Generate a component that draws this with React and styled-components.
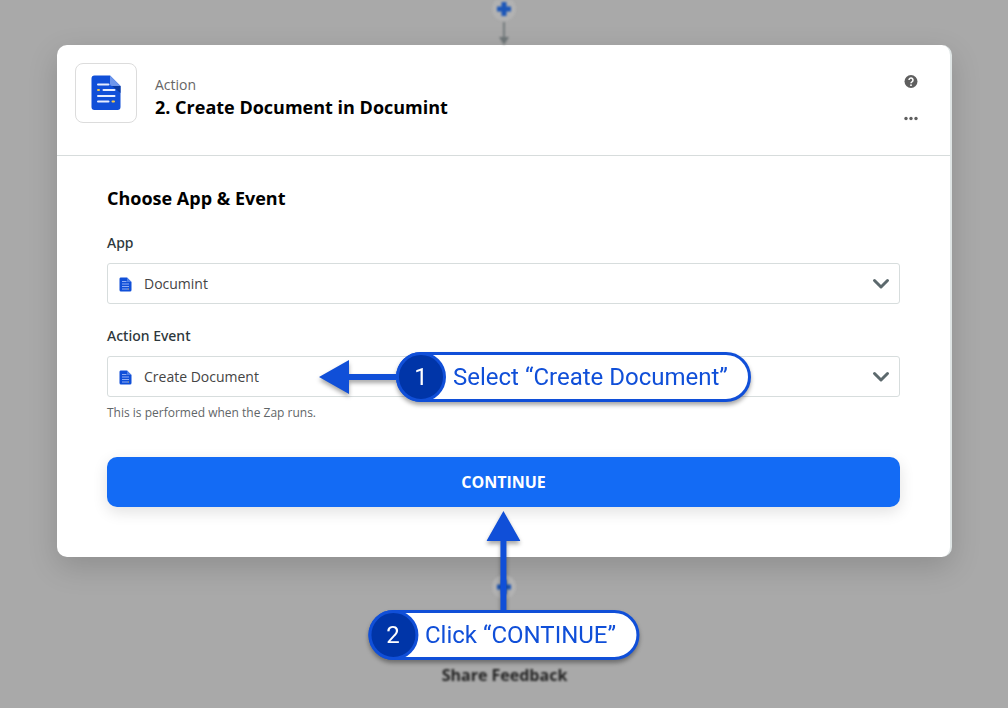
import styled, { createGlobalStyle } from 'styled-components'

const GlobalStyle = createGlobalStyle`
  * {
    box-sizing: border-box;
  }

  body {
    margin: 0;
    background-color: #a9a9a9;
    font-family: 'Open Sans', 'Noto Sans', sans-serif;
    color: #000;
  }

  h1, h2, p {
    margin: 0;
  }
`

const Page = styled.main`
  display: flex;
  flex-direction: column;
  align-items: center;
  min-height: 100vh;
  padding: 0 56px 0 57px;
  overflow: hidden;
`

const TopConnector = styled.svg`
  display: block;
  flex: none;
  filter: blur(1px);
`

const BottomConnector = styled.svg`
  display: block;
  flex: none;
  margin-top: 17px;
  filter: blur(1px);
`

const Card = styled.section`
  width: 100%;
  border-right: 2px solid #dfe5e5;
  border-radius: 10px;
  background-color: #fff;
  box-shadow: 0 10px 30px rgba(0, 0, 0, .16);
`

const CardHeader = styled.header`
  display: flex;
  align-items: flex-start;
  gap: 18px;
  padding: 18px 32px 28px 18px;
  border-bottom: 1px solid #d7dcdc;
`

const AppIcon = styled.div`
  display: flex;
  align-items: center;
  justify-content: center;
  width: 62px;
  height: 60px;
  border: 1px solid #dcdcdc;
  border-radius: 8px;
`

const Heading = styled.div`
  flex: 1;
  padding-top: 12px;
`

const StepKind = styled.p`
  font-size: 14px;
  line-height: 20px;
  color: #666;
`

const StepTitle = styled.h1`
  font-size: 18px;
  font-weight: 700;
  line-height: 24px;
`

const HeaderActions = styled.div`
  display: flex;
  flex-direction: column;
  gap: 20px;
  padding-top: 10px;
`

const IconButton = styled.button`
  display: flex;
  padding: 0;
  border: 0;
  background: none;
  color: #5f5f5f;
  cursor: pointer;
`

const CardBody = styled.div`
  padding: 29px 50px 50px;
`

const SectionTitle = styled.h2`
  margin-bottom: 22px;
  font-size: 18px;
  font-weight: 700;
  line-height: 26px;
`

const Field = styled.div`
  margin-bottom: 22px;
`

const FieldLabel = styled.label`
  display: block;
  margin-bottom: 10px;
  font-family: 'Noto Sans', sans-serif;
  font-size: 14px;
  font-weight: 500;
  line-height: 20px;
  color: #2d373b;
`

const SelectBox = styled.div`
  position: relative;
  display: grid;
  align-items: center;

  > * {
    grid-area: 1 / 1;
  }
`

const Select = styled.select`
  width: 100%;
  height: 41px;
  padding: 0 36px;
  border: 1px solid #d7dddd;
  border-radius: 3px;
  background-color: #fff;
  font-family: inherit;
  font-size: 14px;
  color: #444;
  appearance: none;
  cursor: pointer;
`

const LeadingIcon = styled.span`
  display: flex;
  justify-self: start;
  padding: 2px 0 0 12px;
  pointer-events: none;
`

const Chevron = styled.svg`
  justify-self: end;
  margin-right: 10px;
  pointer-events: none;
`

const Hint = styled.p`
  margin-top: 6px;
  font-size: 12px;
  line-height: 20px;
  color: #5f6668;
`

const ContinueArea = styled.div`
  position: relative;
  margin-top: 34px;
`

const ContinueButton = styled.button`
  display: block;
  width: 100%;
  height: 50px;
  border: 0;
  border-radius: 10px;
  background-color: #136bf5;
  box-shadow: 0 5px 15px rgba(0, 0, 0, .12);
  font-family: inherit;
  font-size: 16px;
  font-weight: 700;
  color: #fff;
  cursor: pointer;
`

const CalloutGroup = styled.div`
  position: absolute;
  z-index: 1;
  display: flex;
  align-items: center;
  filter: drop-shadow(0 3px 2px rgba(0, 0, 0, .35));
  pointer-events: none;
`

const SideCallout = styled(CalloutGroup)`
  top: -4px;
  left: 212px;
`

const BelowCallout = styled(CalloutGroup)`
  top: 54px;
  left: 50%;
  flex-direction: column;
  transform: translateX(-50%);
`

const Pill = styled.div`
  display: flex;
  align-items: center;
  height: 50px;
  padding-right: 20px;
  border: 3px solid #104fd8;
  border-radius: 25px;
  background-color: #fff;
  font-family: Roboto, sans-serif;
  font-size: 24px;
  color: #104fd8;
  white-space: nowrap;
`

const Badge = styled.span`
  display: flex;
  flex: none;
  align-items: center;
  justify-content: center;
  width: 50px;
  height: 50px;
  margin: 0 7px 0 -3px;
  border: 3px solid #104fd8;
  border-radius: 50%;
  background-color: #0035a8;
  color: #fff;
`

const Feedback = styled.a`
  margin-top: 63px;
  font-size: 16px;
  font-weight: 700;
  line-height: 24px;
  color: #222;
  text-decoration: none;
  filter: blur(1px);
`

const DocumintLogo = () => (
  <svg width="30" height="36" viewBox="0 0 30 36" aria-hidden="true">
    <path d="M3.500 .5H19L29.500 11V32a3 3 0 0 1-3 3H3.500a3 3 0 0 1-3-3V3.500a3 3 0 0 1 3-3z" fill="#104fd8" />
    <path d="M21 11H29.500V18z" fill="#0a3aa0" />
    <path d="M19 .5L29.500 11H21a2 2 0 0 1-2-2z" fill="#6d96ec" />
    <g stroke="#e6edff" strokeWidth="2" strokeLinecap="round">
      <path d="M7 9.500H17.500M12.500 15H23.500M7 21H23.500M7 26.500H17.500" />
      <path d="M7 15H8M21.500 26.500H23" stroke="#f4c94d" />
    </g>
  </svg>
)

const SmallLogo = () => (
  <svg width="13" height="15" viewBox="0 0 13 15" aria-hidden="true">
    <path d="M1.500 0.500H8L12.500 5V13a1.500 1.500 0 0 1-1.500 1.500H2A1.500 1.500 0 0 1 .5 13V2a1.500 1.500 0 0 1 1-1.500z" fill="#104fd8" />
    <path d="M8 .5L12.500 5H8z" fill="#4f7fe6" />
    <path d="M3 4.500H7.500M3 7H10M3 9.500H10M3 12H9" stroke="#8fadf5" />
    <path d="M9 12H10" stroke="#d9bd69" />
  </svg>
)

const AppSelect = ({ id, label, value, hint, children }) => (
  <Field>
    <FieldLabel htmlFor={id}>{label}</FieldLabel>
    <SelectBox>
      <Select id={id} defaultValue={value}>
        <option>{value}</option>
      </Select>
      <LeadingIcon><SmallLogo /></LeadingIcon>
      <Chevron width="18" height="12" viewBox="0 0 18 12" aria-hidden="true">
        <path d="M2.500 2.500L9 9L15.500 2.500" fill="none" stroke="#5c696d" strokeWidth="3" strokeLinecap="round" strokeLinejoin="round" />
      </Chevron>
      {children}
    </SelectBox>
    {hint && <Hint>{hint}</Hint>}
  </Field>
)

const PlusNode = ({ cy }) => (
  <>
    <circle cx="13" cy={cy} r="12" fill="#b2b2b2" />
    <path d={`M13 ${cy - 7}V${cy + 7}M6 ${cy}H20`} stroke="#1c56b8" strokeWidth="5" />
  </>
)

const App = () => (
  <>
    <GlobalStyle />
    <Page>
      <TopConnector width="28" height="45" viewBox="0 0 28 45" aria-hidden="true">
        <PlusNode cy={9} />
        <path d="M13 22V39" stroke="#747b7d" strokeWidth="2" />
        <path d="M8 37H18L13 45z" fill="#6c7375" />
      </TopConnector>

      <Card>
        <CardHeader>
          <AppIcon><DocumintLogo /></AppIcon>
          <Heading>
            <StepKind>Action</StepKind>
            <StepTitle>2. Create Document in Documint</StepTitle>
          </Heading>
          <HeaderActions>
            <IconButton type="button" aria-label="Help">
              <svg width="14" height="16" viewBox="0 0 14 16">
                <circle cx="7" cy="8.500" r="6.500" fill="currentColor" />
                <path d="M5 7a2 2 0 1 1 3.200 1.600C7.400 9.100 7 9.400 7 10.200" fill="none" stroke="#fff" strokeWidth="1.500" />
                <circle cx="7" cy="12.200" r="0.900" fill="#fff" />
              </svg>
            </IconButton>
            <IconButton type="button" aria-label="More options">
              <svg width="14" height="18" viewBox="0 0 14 18" fill="currentColor">
                <circle cx="2" cy="9.500" r="1.700" />
                <circle cx="7" cy="9.500" r="1.700" />
                <circle cx="12" cy="9.500" r="1.700" />
              </svg>
            </IconButton>
          </HeaderActions>
        </CardHeader>

        <CardBody>
          <SectionTitle>Choose App &amp; Event</SectionTitle>
          <AppSelect id="app" label="App" value="Documint" />
          <AppSelect
            id="action-event"
            label="Action Event"
            value="Create Document"
            hint="This is performed when the Zap runs."
          >
            <SideCallout>
              <svg width="77" height="50" viewBox="0 0 77 50" aria-hidden="true">
                <path d="M0 25L30 8V22H77V28H30V42z" fill="#104fd8" />
              </svg>
              <Pill><Badge>1</Badge>Select “Create Document”</Pill>
            </SideCallout>
          </AppSelect>

          <ContinueArea>
            <ContinueButton type="button">CONTINUE</ContinueButton>
            <BelowCallout>
              <svg width="34" height="99" viewBox="0 0 34 99" aria-hidden="true">
                <path d="M17 0L34 30H20V99H14V30H0z" fill="#104fd8" />
              </svg>
              <Pill><Badge>2</Badge>Click “CONTINUE”</Pill>
            </BelowCallout>
          </ContinueArea>
        </CardBody>
      </Card>

      <BottomConnector width="28" height="26" viewBox="0 0 28 26" aria-hidden="true">
        <PlusNode cy={13} />
      </BottomConnector>
      <Feedback href="#feedback">Share Feedback</Feedback>
    </Page>
  </>
)

export default App
